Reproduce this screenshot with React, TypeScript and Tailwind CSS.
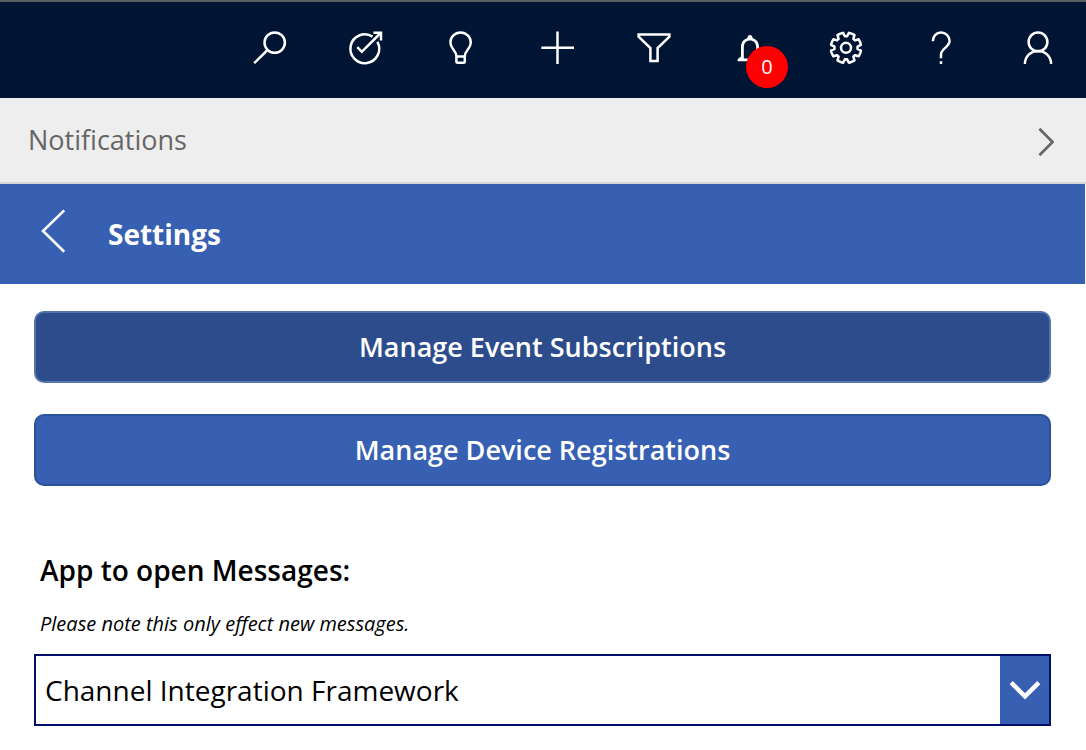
import React from "react";

type IconProps = { children: React.ReactNode };

function Icon({ children }: IconProps) {
  return (
    <svg
      className="size-8 overflow-visible"
      viewBox="0 0 32 32"
      fill="none"
      stroke="currentColor"
      strokeWidth="2.5"
      aria-hidden="true"
    >
      {children}
    </svg>
  );
}

const gearPoints = Array.from({ length: 8 }, (_, k) => {
  const centre = 22.5 + k * 45;
  const corners: [number, number][] = [
    [-17, 11.6],
    [-11.5, 15.2],
    [-4, 15.2],
    [4, 15.2],
    [11.5, 15.2],
    [17, 11.6],
  ];
  return corners
    .map(([offset, radius]) => {
      const a = ((centre + offset) * Math.PI) / 180;
      return `${(16 + radius * Math.cos(a)).toFixed(2)},${(15.8 + radius * Math.sin(a)).toFixed(2)}`;
    })
    .join(" ");
}).join(" ");

const actions: { label: string; icon: React.ReactNode; badge?: number }[] = [
  {
    label: "Search",
    icon: (
      <Icon>
        <circle cx="20.7" cy="10.6" r="10.2" />
        <path d="M13.5 18 0.2 31.2" />
      </Icon>
    ),
  },
  {
    label: "Tasks",
    icon: (
      <Icon>
        <path d="M22.5 4.6A14.4 14.4 0 1 0 27.4 9.8" />
        <path d="M7.3 15.2 11.8 19.8 30.6 1" />
        <path d="M23.4 0.8H31V8.4" />
      </Icon>
    ),
  },
  {
    label: "Insights",
    icon: (
      <Icon>
        <path d="M10.4 24.3C10.4 18.5 4.4 17 4.4 10.6a10.2 10.2 0 0 1 20.4 0C24.8 17 18.8 18.5 18.8 24.3V29.8a1 1 0 0 1-1 1H11.4a1 1 0 0 1-1-1ZM10.4 24.6H18.8" />
      </Icon>
    ),
  },
  {
    label: "Add",
    icon: (
      <Icon>
        <path d="M15.5-.6V32M-.7 15.7H32" />
      </Icon>
    ),
  },
  {
    label: "Filter",
    icon: (
      <Icon>
        <path d="M.6 2.4H31.4V4.6L19.6 16V29H12.4V16L.6 4.6Z" />
      </Icon>
    ),
  },
  {
    label: "Notifications",
    badge: 0,
    icon: (
      <Icon>
        <path
          d="M3.6 28V27.3L7 24.4V15C7 10.4 9.4 7.2 13.3 6.2 13.6 4.1 14.6 3 16 3S18.4 4.1 18.7 6.2C22.6 7.2 25 10.4 25 15V24.4L28.4 27.3V29.2H3.6ZM9.8 26.4H22.2V15.2C22.2 11.2 19.6 8.6 16 8.6S9.8 11.2 9.8 15.2Z"
          fill="currentColor"
          fillRule="evenodd"
          stroke="none"
        />
      </Icon>
    ),
  },
  {
    label: "Settings",
    icon: (
      <Icon>
        <polygon points={gearPoints} strokeLinejoin="round" />
        <circle cx="16" cy="15.8" r="5" />
      </Icon>
    ),
  },
  {
    label: "Help",
    icon: (
      <Icon>
        <path d="M6.8 9.3A8.4 8.6 0 0 1 23.6 8.8C23.6 15.2 15 16.4 15 22.5V26.2M15 29.3V32" />
      </Icon>
    ),
  },
  {
    label: "Account",
    icon: (
      <Icon>
        <circle cx="16" cy="9.9" r="9.4" />
        <path d="M2.9 32A13.1 13.1 0 0 1 29.1 32" />
      </Icon>
    ),
  },
];

export default function App() {
  return (
    <div className="min-h-screen bg-white font-['Open_Sans',sans-serif] text-black">
      <header className="flex h-[98px] justify-end border-t-2 border-[#5c5d5f] bg-[#001433] text-white">
        {actions.map(({ label, icon, badge }) => (
          <button
            key={label}
            type="button"
            aria-label={label}
            className="relative flex w-24 justify-center pt-[30px]"
          >
            <span className="h-8">{icon}</span>
            {badge !== undefined && (
              <span className="absolute top-11 left-11 flex size-[42px] items-center justify-center rounded-full bg-[#ff0000] text-[20px] font-medium">
                {badge}
              </span>
            )}
          </button>
        ))}
      </header>

      <button
        type="button"
        className="flex h-[86px] w-full items-center justify-between border-b-2 border-[#d6d6d6] bg-[#eeeeee] pr-8 pl-7 text-[#666666]"
      >
        <span className="text-[27px]">Notifications</span>
        <svg
          className="mt-1 h-7 w-4"
          viewBox="0 0 16 28"
          fill="none"
          stroke="currentColor"
          strokeWidth="2.8"
          aria-hidden="true"
        >
          <path d="M1.4.8 14.6 14 1.4 27.2" />
        </svg>
      </button>

      <div className="mr-px flex h-[100px] items-center bg-[#3760b2] text-white">
        <button type="button" aria-label="Back" className="mb-1.5 ml-10 w-[68px]">
          <svg
            className="h-11 w-6 overflow-visible"
            viewBox="0 0 24 44"
            fill="none"
            stroke="currentColor"
            strokeWidth="2.6"
            aria-hidden="true"
          >
            <path d="M24.2 1.4 3 22 24.2 42.8" />
          </svg>
        </button>
        <h1 className="text-[28px] font-bold">Settings</h1>
      </div>

      <main className="flex flex-col pt-[27px] pr-[35px] pb-6 pl-[34px]">
        <button
          type="button"
          className="h-[72px] rounded-[10px] border-2 border-[#5573b0] bg-[#2d4c8c] text-[27px] font-semibold text-white"
        >
          Manage Event Subscriptions
        </button>
        <button
          type="button"
          className="mt-[31px] h-[72px] rounded-[10px] border-2 border-[#2b5199] bg-[#3760b2] text-[27px] font-semibold text-white"
        >
          Manage Device Registrations
        </button>

        <label htmlFor="message-app" className="mt-16 pl-1.5 text-[28px] leading-10 font-semibold">
          App to open Messages:
        </label>
        <p id="message-app-note" className="mt-5 pl-1.5 text-[20px] leading-7 italic">
          Please note this only effect new messages.
        </p>
        <div className="mt-4 grid h-[72px] border-2 border-[#00106b]">
          <select
            id="message-app"
            aria-describedby="message-app-note"
            className="col-start-1 row-start-1 w-full appearance-none bg-white pr-14 pl-[9px] text-[28px] outline-none"
          >
            <option>Channel Integration Framework</option>
          </select>
          <span className="pointer-events-none col-start-1 row-start-1 flex w-[49px] items-center justify-center justify-self-end bg-[#3760b2] text-white">
            <svg
              className="h-5 w-8"
              viewBox="0 0 32 20"
              fill="none"
              stroke="currentColor"
              strokeWidth="4.4"
              aria-hidden="true"
            >
              <path d="M2.2 2.6 16 16.4 29.8 2.6" />
            </svg>
          </span>
        </div>
      </main>
    </div>
  );
}
